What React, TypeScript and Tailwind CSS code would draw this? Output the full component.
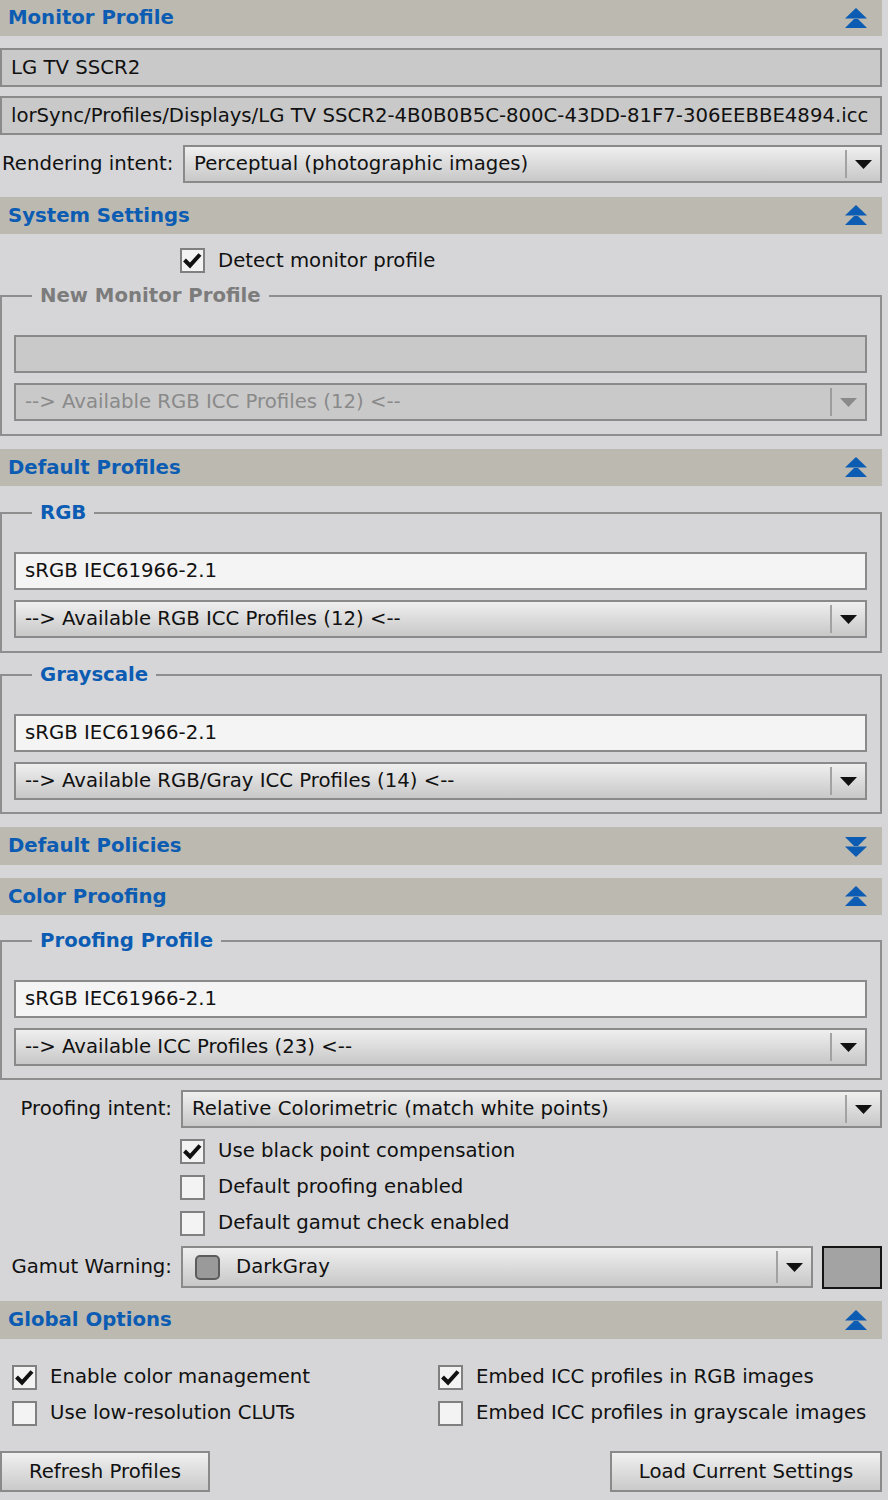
import type { ReactNode } from "react";

const font = "font-['DejaVu_Sans','Liberation_Sans',sans-serif] text-[19.7px] leading-[24px]";

const Chevrons = ({ down = false }: { down?: boolean }) => (
  <svg width="22" height="21" viewBox="0 0 22 21" className={down ? "rotate-180" : ""}>
    <polygon points="11,9 22,20 0,20" fill="#0b5cb2" />
    <polygon points="11,-1 23,11 -1,11" fill="#bcb9b1" />
    <polygon points="11,0 22,10.5 0,10.5" fill="#0b5cb2" />
  </svg>
);

const SectionHeader = ({ title, collapsed = false, className = "h-[37px]" }: { title: string; collapsed?: boolean; className?: string }) => (
  <div className={`flex items-center justify-between bg-[#bcb9b1] pl-[8px] pr-[15px] ${className}`}>
    <span className="font-bold text-[#0b5cb2]">{title}</span>
    <Chevrons down={collapsed} />
  </div>
);

const Arrow = ({ color = "#111" }: { color?: string }) => (
  <svg width="17" height="9" viewBox="0 0 17 9">
    <polygon points="0,0 17,0 8.5,9" fill={color} />
  </svg>
);

const Field = ({ value, disabled = false, className = "" }: { value?: string; disabled?: boolean; className?: string }) => (
  <div
    className={`flex h-[38px] items-center overflow-hidden whitespace-nowrap border-2 border-[#8a8a8a] pl-[9px] ${
      disabled ? "bg-[#c9c9c9]" : "bg-[#f4f4f4]"
    } ${className}`}
  >
    {value}
  </div>
);

type ComboProps = {
  value: string;
  disabled?: boolean;
  icon?: ReactNode;
  className?: string;
};

const Combo = ({ value, disabled = false, icon, className = "" }: ComboProps) => (
  <div
    className={`flex h-[38px] items-center border-2 border-[#8a8a8a] ${
      disabled ? "bg-[#c9c9c9] text-[#8a8a8a]" : "bg-linear-to-b from-[#efefef] to-[#c8c8c8] text-[#111]"
    } ${className}`}
  >
    <div className="flex min-w-0 flex-1 items-center gap-[16px] overflow-hidden whitespace-nowrap pl-[9px]">
      {icon}
      <span>{value}</span>
    </div>
    <div className={`h-[calc(100%-6px)] w-[2px] ${disabled ? "bg-[#9c9c9c]" : "bg-[#a2a2a2]"}`} />
    <div className="flex w-[33px] items-center justify-center pt-[1px]">
      <Arrow color={disabled ? "#8a8a8a" : "#111"} />
    </div>
  </div>
);

const Checkbox = ({ checked = false }: { checked?: boolean }) => (
  <div className="flex h-[25px] w-[25px] shrink-0 items-center justify-center border-2 border-[#808080] bg-[#f3f3f3]">
    {checked && (
      <svg width="21" height="21" viewBox="0 0 21 21">
        <path d="M2.5 10 L8 15.5 L18 4.5" fill="none" stroke="#111" strokeWidth="4" />
      </svg>
    )}
  </div>
);

const CheckRow = ({ label, checked = false, className = "" }: { label: string; checked?: boolean; className?: string }) => (
  <div className={`flex h-[36px] items-center gap-[13px] whitespace-nowrap ${className}`}>
    <Checkbox checked={checked} />
    <span>{label}</span>
  </div>
);

const Group = ({ title, disabled = false, className = "", children }: { title: string; disabled?: boolean; className?: string; children: ReactNode }) => (
  <fieldset className={`border-2 border-[#8e8e8e] pt-[27px] pr-[13px] pl-[12px] ${className}`}>
    <legend className={`ml-[18px] h-[24px] px-[8px] font-bold ${disabled ? "text-[#7c7c7c]" : "text-[#0b5cb2]"}`}>
      {title}
    </legend>
    <div className="flex flex-col gap-[10px]">{children}</div>
  </fieldset>
);

const Button = ({ label, className = "" }: { label: string; className?: string }) => (
  <button className={`flex h-[41px] items-center justify-center border-2 border-[#8a8a8a] bg-linear-to-b from-[#f0f0f0] to-[#cacaca] text-[#111] ${className}`}>
    {label}
  </button>
);

export default function App() {
  return (
    <div className={`h-[1500px] w-[888px] overflow-hidden bg-[#d6d6d8] text-[#111] ${font}`}>
      <div className="flex w-[882px] flex-col">
        <SectionHeader title="Monitor Profile" className="h-[36px]" />
        <Field value="LG TV SSCR2" disabled className="mt-[12px] h-[39px]" />
        <Field
          value="lorSync/Profiles/Displays/LG TV SSCR2-4B0B0B5C-800C-43DD-81F7-306EEBBE4894.icc"
          disabled
          className="mt-[9px] h-[39px] pl-[6px]"
        />
        <div className="mt-[10px] flex h-[38px] items-center">
          <span className="w-[172px] shrink-0 whitespace-nowrap pl-[2px]">Rendering intent:</span>
          <Combo value="Perceptual (photographic images)" className="ml-[11px] flex-1" />
        </div>

        <SectionHeader title="System Settings" className="mt-[14px] h-[37px]" />
        <div className="mt-[14px] h-[25px] pl-[180px]">
          <div className="flex h-[25px] items-center gap-[13px]">
            <Checkbox checked />
            <span>Detect monitor profile</span>
          </div>
        </div>
        <Group title="New Monitor Profile" disabled className="mt-[11px] pb-[13px]">
          <Field disabled />
          <Combo value="--> Available RGB ICC Profiles (12) <--" disabled />
        </Group>

        <SectionHeader title="Default Profiles" className="mt-[13px] h-[37px]" />
        <Group title="RGB" className="mt-[15px] pb-[13px]">
          <Field value="sRGB IEC61966-2.1" />
          <Combo value="--> Available RGB ICC Profiles (12) <--" />
        </Group>
        <Group title="Grayscale" className="mt-[10px] pb-[12px]">
          <Field value="sRGB IEC61966-2.1" />
          <Combo value="--> Available RGB/Gray ICC Profiles (14) <--" />
        </Group>

        <SectionHeader title="Default Policies" collapsed className="mt-[13px] h-[38px]" />
        <SectionHeader title="Color Proofing" className="mt-[13px] h-[37px]" />
        <Group title="Proofing Profile" className="mt-[14px] pb-[12px]">
          <Field value="sRGB IEC61966-2.1" />
          <Combo value="--> Available ICC Profiles (23) <--" />
        </Group>
        <div className="mt-[10px] flex h-[38px] items-center">
          <span className="w-[172px] shrink-0 whitespace-nowrap text-right">Proofing intent:</span>
          <Combo value="Relative Colorimetric (match white points)" className="ml-[9px] flex-1" />
        </div>
        <div className="mt-[5px] flex flex-col pl-[180px]">
          <CheckRow label="Use black point compensation" checked />
          <CheckRow label="Default proofing enabled" />
          <CheckRow label="Default gamut check enabled" />
        </div>
        <div className="mt-[4px] flex h-[44px] items-center">
          <span className="w-[172px] shrink-0 whitespace-nowrap text-right">Gamut Warning:</span>
          <Combo
            value="DarkGray"
            className="ml-[9px] h-[42px] flex-1"
            icon={<div className="ml-[3px] h-[25px] w-[25px] shrink-0 rounded-[5px] border-2 border-[#5c5c5c] bg-[#9a9a9a] blur-[0.4px]" />}
          />
          <div className="ml-[9px] h-[43px] w-[60px] border-2 border-[#151515] bg-[#a3a3a3]" />
        </div>

        <SectionHeader title="Global Options" className="mt-[12px] h-[38px]" />
        <div className="mt-[20px] grid grid-cols-[438px_1fr]">
          <CheckRow label="Enable color management" checked className="pl-[12px]" />
          <CheckRow label="Embed ICC profiles in RGB images" checked />
          <CheckRow label="Use low-resolution CLUTs" className="pl-[12px]" />
          <CheckRow label="Embed ICC profiles in grayscale images" />
        </div>
        <div className="mt-[20px] flex justify-between">
          <Button label="Refresh Profiles" className="w-[210px]" />
          <Button label="Load Current Settings" className="w-[272px]" />
        </div>
      </div>
    </div>
  );
}
